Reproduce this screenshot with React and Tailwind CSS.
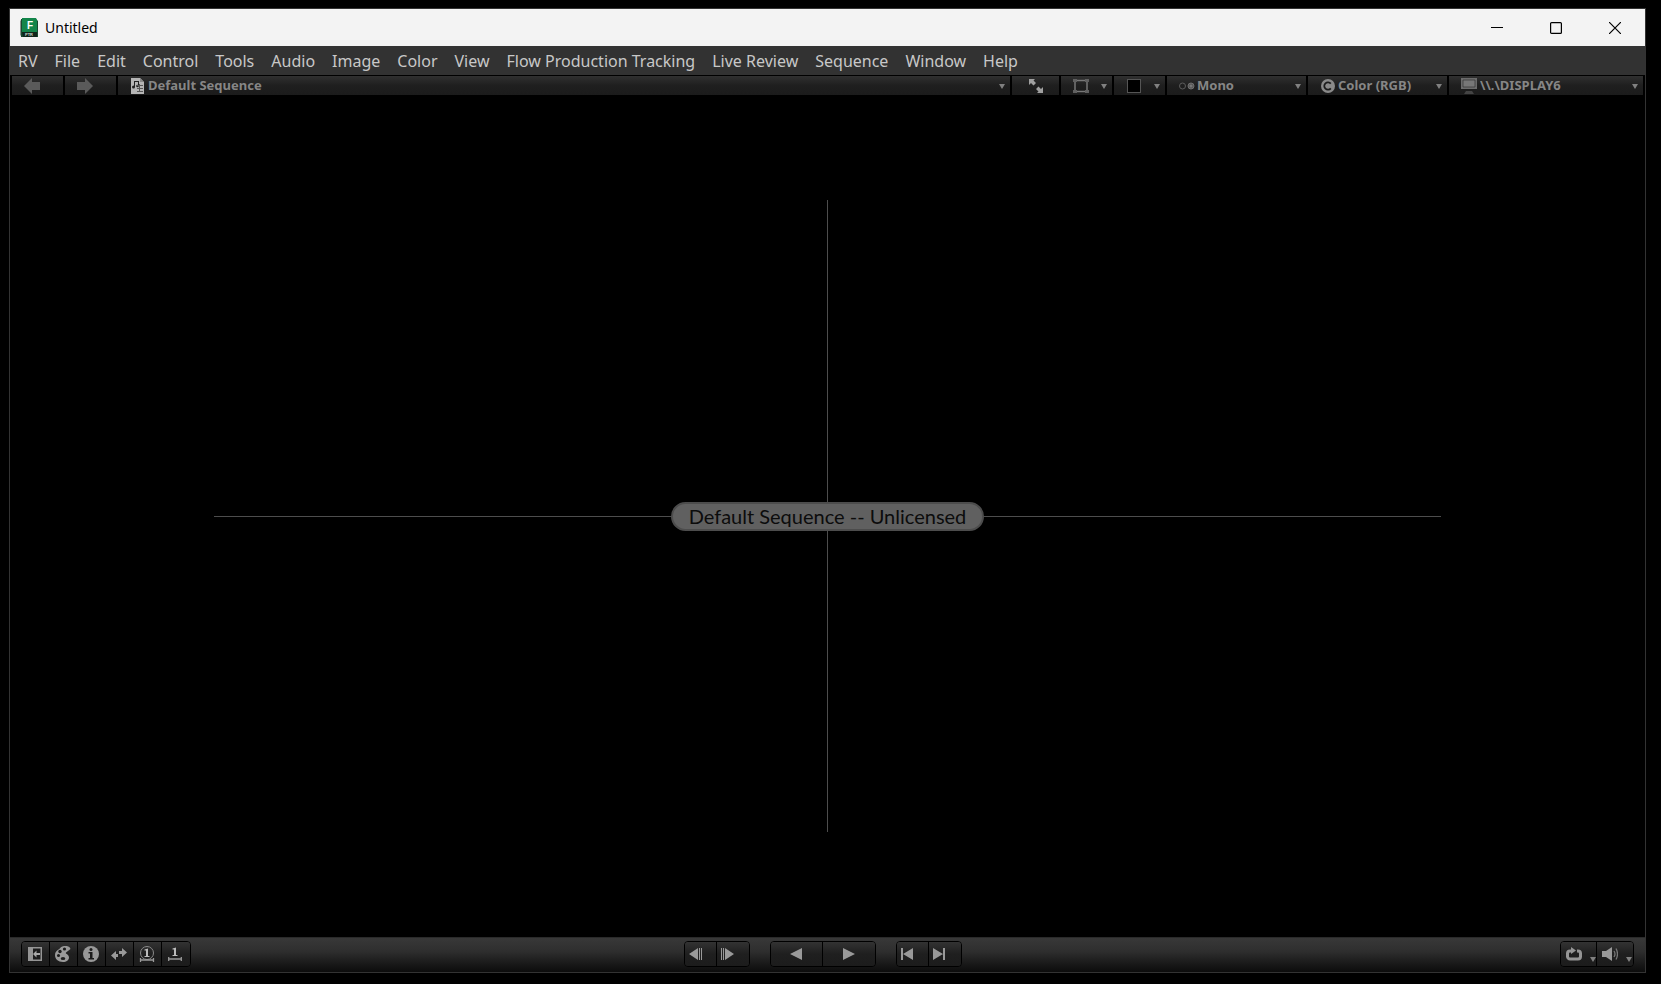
import clsx from 'clsx'

const MENUS = [
  'RV', 'File', 'Edit', 'Control', 'Tools', 'Audio', 'Image', 'Color', 'View',
  'Flow Production Tracking', 'Live Review', 'Sequence', 'Window', 'Help',
]

const UI_FONT = "font-['Noto_Sans','Open_Sans',sans-serif]"

function Icon({ w, h, children, className }) {
  return (
    <svg width={w} height={h} viewBox={`0 0 ${w} ${h}`} className={clsx('shrink-0', className)} aria-hidden="true">
      {children}
    </svg>
  )
}

function AppLogo() {
  return (
    <Icon w={20} h={20}>
      <path d="M3 1 1 3v14l2 2" fill="#8a8f8c" />
      <path d="M2 1h15l2 2v16H2z" fill="#17492f" />
      <path d="M3 0h14l1 2v12H3z" fill="#13854a" />
      <path d="M3 14h15v5H4z" fill="#10251b" />
      <text x="8" y="11" fontSize="10" fontWeight="700" fill="#fff" fontFamily="Liberation Sans">F</text>
      <text x="6" y="18" fontSize="4" fontWeight="700" fill="#c9d6cf" fontFamily="Liberation Sans">PTR</text>
    </Icon>
  )
}

function TitleBar() {
  const btn = 'w-[59px] flex items-center justify-center text-black'
  return (
    <header className="h-[37px] bg-[#f3f3f3] flex items-center pl-[9px] pr-px">
      <AppLogo />
      <h1 className="ml-1.5 text-[14px] leading-5 text-black">Untitled</h1>
      <div className="ml-auto flex self-stretch">
        <button className={btn} aria-label="Minimize">
          <Icon w={12} h={12}><path d="M0 5.5h12" stroke="currentColor" /></Icon>
        </button>
        <button className={btn} aria-label="Maximize">
          <Icon w={12} h={12}><rect x=".6" y=".6" width="10.8" height="10.8" rx="1" fill="none" stroke="currentColor" strokeWidth="1.2" /></Icon>
        </button>
        <button className={btn} aria-label="Close">
          <Icon w={12} h={12}><path d="m0 0 12 12M12 0 0 12" stroke="currentColor" strokeWidth="1.2" /></Icon>
        </button>
      </div>
    </header>
  )
}

function MenuBar() {
  return (
    <nav className="h-[29px] bg-[#323232] flex items-center gap-[17px] pl-2 text-[16px] leading-6 text-[#c8c8c8] whitespace-nowrap">
      {MENUS.map(m => <button key={m}>{m}</button>)}
    </nav>
  )
}

function Caret({ className }) {
  return (
    <Icon w={6} h={5} className={className}>
      <path d="M0 0h6L3 5z" fill="#808080" />
    </Icon>
  )
}

const CELL = 'h-[19px] flex items-center bg-linear-to-b from-[#303030] via-[#1f1f1f] via-50% to-[#1b1b1b]'

function Picker({ icon, value, label, className }) {
  return (
    <label className={clsx(CELL, 'pr-[5px]', className)}>
      {icon}
      <select aria-label={label} defaultValue={value} className="flex-1 min-w-0 h-[19px] appearance-none bg-transparent text-[13px] leading-[19px] font-bold text-[#868686] outline-none">
        <option>{value}</option>
      </select>
      <Caret className="mt-0.5" />
    </label>
  )
}

function ToolBar() {
  return (
    <div className="bg-black flex gap-0.5 pt-px pl-0.5 pr-0.5">
      <button className={clsx(CELL, 'w-[51px] pl-3')} aria-label="Previous view">
        <Icon w={16} h={16}><path d="M0 8 8 0v4h8v8H8v4z" fill="#5a5a5a" /></Icon>
      </button>
      <button className={clsx(CELL, 'w-[51px] pl-3')} aria-label="Next view">
        <Icon w={16} h={16}><path d="M16 8 8 0v4H0v8h8v4z" fill="#5a5a5a" /></Icon>
      </button>
      <Picker
        label="View"
        value="Default Sequence"
        className="flex-1 pl-[13px] gap-[3px]"
        icon={
          <Icon w={14} h={16}>
            <path d="M0 0h9l4 4v12H0z" fill="#b5b5b5" />
            <path d="M9 0v4h4z" fill="#888" />
            <path d="M3 3h4v1H4v5H3z" fill="#222" />
            <path d="M7 3h1v5H7z" fill="#222" />
            <circle cx="2.500" cy="9" r="1.500" fill="#222" />
            <circle cx="6.500" cy="8" r="1.300" fill="#222" />
            <path d="M6 7.500h6M6 10.500h6M6 13.500h6M8.500 6v8" stroke="#555" />
          </Icon>
        }
      />
      <button className={clsx(CELL, 'w-[47px] justify-center')} aria-label="Full screen">
        <Icon w={14} h={14}>
          <path d="M0 0h6L4.500 1.500 7 4 4.500 6.500 2 4 0 6z" fill="#a0a0a0" />
          <path d="M14 14H8l1.500-1.500L7 10l2.500-2.500L12 10l2-2z" fill="#a0a0a0" />
        </Icon>
      </button>
      <button className={clsx(CELL, 'w-[51px] pl-3 pr-[5px] justify-between')} aria-label="Frame mode">
        <Icon w={16} h={14}>
          <rect x="2" y="1.500" width="12" height="11" fill="none" stroke="#777" strokeWidth="1.500" />
          <path d="M0 0h4v3H0zM12 0h4v3h-4zM0 11h4v3H0zM12 11h4v3h-4z" fill="#606060" />
        </Icon>
        <Caret className="mt-0.5" />
      </button>
      <button className={clsx(CELL, 'w-[51px] pl-[13px] pr-[5px] justify-between')} aria-label="Background color">
        <span className="size-3.5 bg-black border border-[#555]" />
        <Caret className="mt-0.5" />
      </button>
      <Picker
        label="Stereo mode"
        value="Mono"
        className="w-[139px] pl-3 gap-0.5"
        icon={
          <Icon w={16} h={8}>
            <circle cx="3.500" cy="4" r="3" fill="none" stroke="#5c5c5c" />
            <circle cx="12" cy="4" r="3" fill="#555" stroke="#707070" />
            <circle cx="12" cy="4" r="1.500" fill="#777" />
          </Icon>
        }
      />
      <Picker
        label="Channel display"
        value="Color (RGB)"
        className="w-[139px] pl-[13px] gap-[3px]"
        icon={
          <Icon w={14} h={14}>
            <circle cx="7" cy="7" r="7" fill="#8a8a8a" />
            <path d="M9.800 4.600A3.700 3.700 0 1 0 9.800 9.400" fill="none" stroke="#1c1c1c" strokeWidth="1.800" />
          </Icon>
        }
      />
      <Picker
        label="Display"
        value="\\.\DISPLAY6"
        className="w-[194px] pl-3 gap-[3px]"
        icon={
          <Icon w={16} h={16}>
            <path d="M0 0h16v11H0z" fill="#6c6c6c" />
            <path d="M2 2h12v7H2z" fill="#777" stroke="#333" strokeWidth=".7" />
            <path d="M5 13h6l2 3H3z" fill="#444" />
          </Icon>
        }
      />
    </div>
  )
}

function Viewer() {
  return (
    <main className="relative flex-1 bg-black">
      <div className="absolute inset-x-[12.5%] top-1/2 h-px bg-[#4d4d4d]" />
      <div className="absolute inset-y-[12.5%] left-1/2 w-px -ml-px bg-[#4d4d4d]" />
      <div className="absolute inset-0 flex items-center justify-center">
        <p className="h-[29px] px-4 flex items-center rounded-full bg-[#606060] border-2 border-[#4c4c4c] font-['Lato',sans-serif] text-[20px] leading-6 text-[#0c0c0c] whitespace-nowrap">
          Default Sequence -- Unlicensed
        </p>
      </div>
    </main>
  )
}

function Group({ children }) {
  return (
    <div className="flex h-[26px] border border-black rounded-sm overflow-hidden divide-x divide-black">
      {children}
    </div>
  )
}

function Key({ label, className, children }) {
  return (
    <button aria-label={label} className={clsx('flex items-center bg-linear-to-b from-[#333] via-[#1f1f1f] via-50% to-[#1c1c1c]', className)}>
      {children}
    </button>
  )
}

function BottomBar() {
  return (
    <footer className="h-[35px] grid grid-cols-[1fr_auto_1fr] items-start pt-[3px] px-[11px] border-t border-[#2a2a2a] bg-linear-to-b from-[#383838] via-[#2e2e2e] via-40% to-[#0c0c0c]">
      <div className="flex">
        <Group>
          <Key label="Session manager" className="w-7 pl-1.5">
            <Icon w={14} h={14}>
              <path d="M0 0h14v14H0z" fill="#959595" />
              <path d="M5 1.500h7.500v11H5z" fill="#1c1c1c" />
              <path d="M5 7l3.500-3.500V6H12v2H8.500v2.500z" fill="#aaa" />
            </Icon>
          </Key>
          <Key label="Annotation" className="w-7 pl-[5px]">
            <Icon w={16} h={16}>
              <path d="M9 0c4-.5 6 1 6.500 3L11 6.500C10 8 14 8 14 11.500 14 14 11.500 16 8 16c-5 0-8-3-8-7 0-3 1.500-4 3.500-5.500C5.500 2 6 .4 9 0z" fill="#999" />
              <circle cx="9.500" cy="3" r="1.600" fill="#1c1c1c" />
              <circle cx="5" cy="5.500" r="1.700" fill="#1c1c1c" />
              <circle cx="3.500" cy="9.500" r="1.500" fill="#1c1c1c" />
              <ellipse cx="8" cy="12.500" rx="2.300" ry="1.500" fill="#1c1c1c" />
            </Icon>
          </Key>
          <Key label="Image info" className="w-7 pl-[5px]">
            <Icon w={16} h={16}>
              <circle cx="8" cy="8" r="8" fill="#999" />
              <circle cx="8" cy="3.500" r="1.500" fill="#1c1c1c" />
              <path d="M5.500 6h4v6h1.500v1.500H5.500V12H7V7.500H5.500z" fill="#1c1c1c" />
            </Icon>
          </Key>
          <Key label="Timeline magnifier" className="w-7 pl-[5px]">
            <Icon w={16} h={12}>
              <path d="M0 7.500 5 3v3h2v3H5v3z" fill="#999" />
              <path d="M16 4.500 11 0v3H8v3h3v3z" fill="#999" />
            </Icon>
          </Key>
          <Key label="Timeline" className="w-7 pl-[5px]">
            <Icon w={16} h={16}>
              <circle cx="8" cy="7" r="6.500" fill="none" stroke="#8a8a8a" />
              <path d="M1.500 12v4M14.500 12v4M2 14h12" stroke="#999" strokeWidth="1.300" fill="none" />
              <path d="M5.500 3.500 9 2.500V10h1.500v1h-5v-1H7V4.500H5.500z" fill="#bbb" />
            </Icon>
          </Key>
          <Key label="Frame numbers" className="w-7 pl-1.5">
            <Icon w={14} h={14}>
              <path d="M.7 10v4M13.300 10v4M1 12h12" stroke="#999" strokeWidth="1.300" fill="none" />
              <path d="M4.500 1.500 8 .5V8h1.500v1h-5V8H6V2.500H4.500z" fill="#bbb" />
            </Icon>
          </Key>
        </Group>
      </div>

      <div className="flex gap-5 pr-2.5">
        <Group>
          <Key label="Step back" className="w-8 pl-1">
            <Icon w={14} h={12}>
              <path d="M0 6 9 0v12zM10 0h1v12h-1zM12 0h1v12h-1z" fill="#999" />
            </Icon>
          </Key>
          <Key label="Step forward" className="w-8 pl-1">
            <Icon w={14} h={12}>
              <path d="M13 6 4 0v12zM0 0h1v12H0zM2 0h1v12H2z" fill="#999" />
            </Icon>
          </Key>
        </Group>
        <Group>
          <Key label="Play backward" className="w-[52px] justify-center">
            <Icon w={12} h={12}><path d="M0 6 12 0v12z" fill="#999" /></Icon>
          </Key>
          <Key label="Play forward" className="w-[52px] justify-center">
            <Icon w={12} h={12}><path d="M12 6 0 0v12z" fill="#999" /></Icon>
          </Key>
        </Group>
        <Group>
          <Key label="Jump to start" className="w-8 pl-1">
            <Icon w={14} h={12}>
              <path d="M2 6l10-6v12zM0 0h2v12H0z" fill="#999" />
            </Icon>
          </Key>
          <Key label="Jump to end" className="w-8 pl-1">
            <Icon w={14} h={12}>
              <path d="M10 6 0 0v12zM10 0h2v12h-2z" fill="#999" />
            </Icon>
          </Key>
        </Group>
      </div>

      <div className="flex justify-end">
        <Group>
          <Key label="Loop mode" className="w-9 pl-[5px] gap-2">
            <Icon w={16} h={14}>
              <path d="M5 4H4a2.500 2.500 0 0 0-2.500 2.500v3A2.500 2.500 0 0 0 4 12h8a2.500 2.500 0 0 0 2.500-2.500v-3A2.500 2.500 0 0 0 12 4h-1" fill="none" stroke="#959595" strokeWidth="3" />
              <path d="M5 0l5 3.500L5 7z" fill="#959595" />
            </Icon>
            <Caret className="mt-2.5" />
          </Key>
          <Key label="Volume" className="w-9 pl-[5px] gap-2">
            <Icon w={16} h={14}>
              <path d="M0 4h4l6-4v14l-6-4H0z" fill="#999" />
              <path d="M12 4q2 3 0 6M14 1.500q3 5.500 0 11" fill="none" stroke="#777" strokeWidth="1.300" />
            </Icon>
            <Caret className="mt-2.5" />
          </Key>
        </Group>
      </div>
    </footer>
  )
}

export default function App() {
  return (
    <div className={clsx('h-screen bg-black pt-2 pr-[15px] pb-[11px] pl-[9px]', UI_FONT)}>
      <div className="h-full flex flex-col border border-[#333]">
        <TitleBar />
        <MenuBar />
        <ToolBar />
        <Viewer />
        <BottomBar />
      </div>
    </div>
  )
}
